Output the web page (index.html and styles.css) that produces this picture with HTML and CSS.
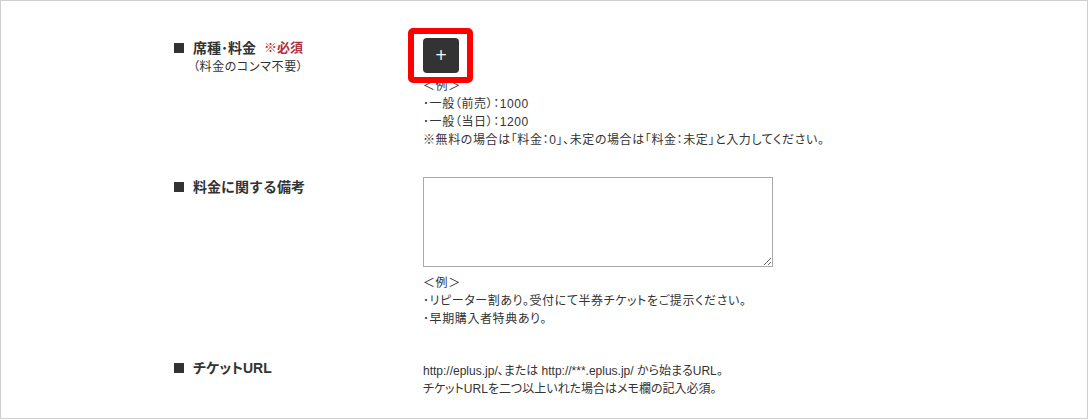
FILE: index.html
```html
<!DOCTYPE html>
<html lang="ja">
<head>
    <meta charset="UTF-8">
    <title>チケット情報入力</title>
    <link rel="stylesheet" href="styles.css">
</head>
<body>
    <div class="frame">

        <!-- 席種・料金 -->
        <div class="row row-price">
            <div class="label">
                <p class="label-title"><span class="mark"></span>席種･料金 <span class="required">※必須</span></p>
                <p class="label-note">（料金のコンマ不要）</p>
            </div>
            <div class="field">
                <div class="add-wrap">
                    <button class="add-button" type="button">+</button>
                    <span class="highlight"></span>
                </div>
                <div class="example example-tight">
                    ＜例＞<br>
                    ･一般（前売）：1000<br>
                    ･一般（当日）：1200<br>
                    ※無料の場合は「料金：0」、未定の場合は「料金：未定」と入力してください。
                </div>
            </div>
        </div>

        <!-- 料金に関する備考 -->
        <div class="row row-memo">
            <div class="label">
                <p class="label-title"><span class="mark"></span>料金に関する備考</p>
            </div>
            <div class="field">
                <textarea class="memo"></textarea>
                <div class="example">
                    ＜例＞<br>
                    ･リピーター割あり。受付にて半券チケットをご提示ください。<br>
                    ･早期購入者特典あり。
                </div>
            </div>
        </div>

        <!-- チケットURL -->
        <div class="row row-url">
            <div class="label">
                <p class="label-title label-narrow"><span class="mark"></span>チケットURL</p>
            </div>
            <div class="field">
                <div class="example example-url">
                    http://eplus.jp/、または http://***.eplus.jp/ から始まるURL。<br>
                    チケットURLを二つ以上いれた場合はメモ欄の記入必須。
                </div>
            </div>
        </div>

    </div>
</body>
</html>
```

FILE: styles.css
```css
body {
    margin: 0;
    padding: 0;
    background: #fff;
    color: #333;
    font-family: "Liberation Sans", "Noto Sans CJK JP", sans-serif;
}
p {
    margin: 0;
}
.frame {
    box-sizing: border-box;
    width: 1088px;
    height: 419px;
    border: 1px solid #cfcfcf;
    padding: 37px 0 0 173px;
}
.row {
    display: grid;
    grid-template-columns: 249px 350px;
}
.row-memo {
    margin-top: 28px;
}
.row-url {
    margin-top: 30px;
}
.row-url .field {
    padding-top: 4px;
}
.label-title {
    display: flex;
    align-items: center;
    font-size: 14px;
    line-height: 20px;
    font-weight: bold;
    color: #333;
    white-space: nowrap;
}
.label-narrow {
    font-feature-settings: "palt";
}
.mark {
    display: inline-block;
    width: 10px;
    height: 10px;
    background: #333;
    margin-right: 9px;
}
.required {
    color: #b3303c;
    font-size: 13px;
    margin-left: 8px;
    font-feature-settings: "palt";
}
.label-note {
    font-size: 12px;
    line-height: 18px;
    padding-left: 19px;
    font-feature-settings: "palt";
    letter-spacing: 0.6px;
}
.add-wrap {
    position: relative;
    width: 36px;
    height: 35px;
}
.add-button {
    width: 36px;
    height: 35px;
    padding: 0;
    border: none;
    border-radius: 4px;
    background: #333;
    color: #fff;
    font-family: "DejaVu Sans", sans-serif;
    font-size: 15px;
    font-weight: normal;
    line-height: 35px;
    cursor: pointer;
}
.highlight {
    position: absolute;
    left: -15px;
    top: -10px;
    width: 65px;
    height: 55px;
    box-sizing: border-box;
    border: 6px solid #f00;
    border-radius: 5px;
    pointer-events: none;
}
.example {
    font-size: 12px;
    line-height: 18px;
    white-space: nowrap;
    font-feature-settings: "palt";
    letter-spacing: 0.6px;
    margin-top: 7px;
}
.example-tight {
    margin-top: 4px;
}
.memo {
    display: block;
    box-sizing: border-box;
    width: 350px;
    height: 90px;
    margin: 0;
    border: 1px solid #a9a9a9;
    resize: both;
}
.row-url .example-url {
    margin-top: 0;
    letter-spacing: 0;
}
```
